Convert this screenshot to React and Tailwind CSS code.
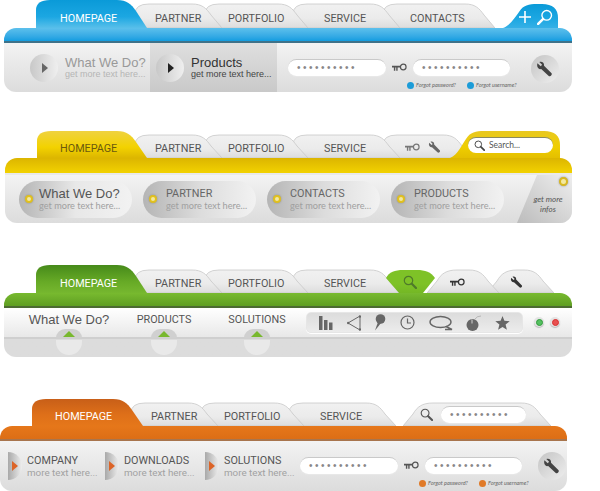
const themes = {
  blue: { stops: ["#0a9ad8", "#1ca7e2", "#58bfea"], bar: "from-[#5cc0ec] to-[#0e9de0] border-[#3f7289]" },
  yellow: { stops: ["#efd240", "#f3d200", "#dcb600"], bar: "from-[#dcb500] to-[#f2d200] border-[#e9e9e9]" },
  green: { stops: ["#468a1a", "#67aa26", "#76b72f"], bar: "from-[#78ba2f] to-[#5f9e22] border-[#4c6b32]" },
  orange: { stops: ["#c85f18", "#df7019", "#e5771a"], bar: "from-[#e6771a] to-[#dc6e16] border-[#a8754d]" },
};

const gray = ["#f1f1f1", "#ebebeb", "#dcdcdc"];

const tabPath = (w, h, t, kind) => {
  if (kind === "both")
    return `M0 ${h} L10 ${t + 11} C14 ${t + 4} 19 ${t} 30 ${t} H${w - 30} C${w - 20} ${t} ${w - 16} ${t + 4} ${w - 11} ${t + 11} L${w} ${h} Z`;
  if (kind === "left")
    return `M0 ${h} C8 ${h - 3} 12 ${t + 13} 16 ${t + 8} C20 ${t + 1} 26 ${t} 34 ${t} H${w - 16} Q${w} ${t} ${w} ${t + 14} V${h} Z`;
  if (kind === "invert")
    return `M14 ${h} L1 ${t + 8} C4 ${t + 2} 10 ${t} 18 ${t} H32 C40 ${t} 46 ${t + 2} ${w} ${t + 8} L${w - 12} ${h} Z`;
  return `M0 ${h} V${t + 10} Q0 ${t} 14 ${t} H${w - 30} C${w - 20} ${t} ${w - 16} ${t + 4} ${w - 11} ${t + 11} L${w} ${h} Z`;
};

const Tab = ({ id, w, h = 28, top = 4, kind = "right", stops = gray, className = "", inner = "pt-[10px]", children }) => (
  <div className={`relative flex shrink-0 items-center ${className}`}>
    <svg className="absolute inset-0" width={w} height={h} viewBox={`0 0 ${w} ${h}`}>
      <defs>
        <linearGradient id={id} x1="0" y1="0" x2="0" y2="1">
          <stop offset="0" stopColor={stops[0]} />
          <stop offset="0.6" stopColor={stops[1]} />
          <stop offset="1" stopColor={stops[2]} />
        </linearGradient>
      </defs>
      <path d={tabPath(w, h, top, kind)} fill={`url(#${id})`} stroke={stops === gray ? "#c8c8c8" : "none"} strokeWidth="0.8" />
    </svg>
    <div className={`relative flex items-center ${inner}`}>{children}</div>
  </div>
);

const Label = ({ children, className = "text-[#555]" }) => (
  <span className={`font-['Roboto',sans-serif] text-[10.800px] leading-none ${className}`}>{children}</span>
);

const Key = ({ color = "#555" }) => (
  <svg width="15" height="9" viewBox="0 0 16 9">
    <circle cx="12" cy="4" r="3" fill="none" stroke={color} strokeWidth="1.3" />
    <path d="M0 2.5h9v2H6V8H4.5V4.5h-1V8H2V4.5H0z" fill={color} />
  </svg>
);

const WrenchIcon = ({ size = 18, color = "#444" }) => (
  <svg width={size} height={size} viewBox="0 0 18 18">
    <path d="M1.5 2.5 L5 5.5 L6.5 4 L3.5 1 C6 0 9 1.500 8.500 5 L16.500 13 C17.500 14.500 15 17 13.500 16 L5.500 8.500 C2.500 9.500 0.500 6 1.500 2.500 Z" fill={color} />
  </svg>
);

const Lens = ({ size = 14, color = "#555" }) => (
  <svg width={size} height={size} viewBox="0 0 14 14">
    <circle cx="5.500" cy="5.500" r="4.200" fill="none" stroke={color} strokeWidth="1.200" />
    <path d="M8.800 8.800 L13 13" stroke={color} strokeWidth="2.200" strokeLinecap="round" />
  </svg>
);

const Dots = ({ className = "w-[98px]" }) => (
  <div className={`flex h-[17px] items-center rounded-full border-t border-[#c9c9c9] bg-white pl-[9px] shadow-[0_1px_1px_#e8e8e8] ${className}`}>
    <span className="font-['Liberation_Sans',sans-serif] text-[10px] leading-none tracking-[2.500px] text-[#888]">••••••••••</span>
  </div>
);

const LoginFields = ({ dot, className = "" }) => (
  <div className={`flex flex-col ${className}`}>
    <div className="flex items-center">
      <Dots />
      <div className="mx-[6px] flex items-center"><Key /></div>
      <Dots className="w-[97px]" />
    </div>
    <div className="mt-[6px] flex h-[7px] items-center pl-[119px]">
      <span className={`h-[7px] w-[7px] rounded-full ${dot}`} />
      <span className="ml-[2px] w-[51px] font-['Lato',sans-serif] text-[5.500px] italic leading-none text-[#666]">Forgot password?</span>
      <span className={`h-[7px] w-[7px] rounded-full ${dot}`} />
      <span className="ml-[2px] font-['Lato',sans-serif] text-[5.500px] italic leading-none text-[#666]">Forgot username?</span>
    </div>
  </div>
);

const WrenchButton = ({ className = "" }) => (
  <div className={`flex h-[28px] w-[28px] items-center justify-center rounded-full bg-linear-to-br from-[#c4c4c4] to-[#efefef] ${className}`}>
    <WrenchIcon size={17} />
  </div>
);

const Play = ({ dark }) => (
  <div className="flex h-[28px] w-[28px] shrink-0 items-center justify-center rounded-full bg-linear-to-r from-[#c8c8c8] to-[#efefef]">
    <span className={`ml-[1px] h-0 w-0 border-y-[5px] border-l-[6px] border-y-transparent ${dark ? "border-l-[#222]" : "border-l-[#666]"}`} />
  </div>
);

const Bar = ({ theme, className = "" }) => (
  <div className={`h-[15px] rounded-t-[12px] border-b-2 bg-linear-to-b ${themes[theme].bar} ${className}`} />
);

const Pill = ({ title, big, className = "" }) => (
  <div className={`flex h-[37px] w-[113px] shrink-0 items-center rounded-full bg-linear-to-r from-[#b5b5b5] via-[#dcdcdc] to-[#f2f2f2] pl-[6px] ${className}`}>
    <span className="h-[8px] w-[8px] rounded-full border-2 border-[#e0c020] bg-[#f3e9a0] shadow-[0_0_2px_#888]" />
    <div className={`flex flex-col ${big ? "ml-[6px]" : "ml-[9px]"}`}>
      {big ? (
        <span className="font-['Liberation_Sans',sans-serif] text-[13px] leading-[13px] text-[#555]">{title}</span>
      ) : (
        <span className="font-['Roboto',sans-serif] text-[10.800px] leading-[12px] text-[#666]">{title}</span>
      )}
      <span className="whitespace-nowrap font-['Lato',sans-serif] text-[9.200px] leading-[11px] text-[#a0a0a0]">get more text here...</span>
    </div>
  </div>
);

const Notch = ({ title, big, className = "" }) => (
  <div className={`flex w-[70px] flex-col items-center pt-[3px] ${className}`}>
    <span className={big ? "whitespace-nowrap font-['Liberation_Sans',sans-serif] text-[13px] leading-[17px] text-[#555]" : "whitespace-nowrap font-['Roboto',sans-serif] text-[10.800px] leading-[17px] text-[#555]"}>{title}</span>
    <div className="mt-[1px] flex h-[9px] w-[26px] items-start justify-center rounded-t-full bg-[#d0d0d0] pt-[2px]">
      <span className="h-0 w-0 border-x-[6px] border-b-[6px] border-x-transparent border-b-[#78b82e]" />
    </div>
    <div className="mt-[2px] h-[15px] w-[26px] rounded-b-full bg-[#e9e9e9]" />
  </div>
);

const ToolIcons = () => (
  <div className="ml-[14px] mt-[4px] flex h-[21px] w-[217px] items-center justify-between rounded-[5px] border border-[#e6e6e6] bg-linear-to-b from-[#dcdcdc] to-[#ececec] px-[12px] shadow-[0_1px_0_#fff]">
    <svg width="14" height="14" viewBox="0 0 14 14" fill="#666"><path d="M0 0h3.500v14H0zM5 4h3.500v10H5zM10 6.500h3.500V14H10z" /></svg>
    <svg width="14" height="16" viewBox="0 0 14 16" fill="#666"><path d="M13 1 L1 8 L13 15 Z" fill="none" stroke="#666" /><circle cx="13" cy="1.500" r="1.200" /><circle cx="13" cy="14.500" r="1.200" /><circle cx="1.200" cy="8" r="1.200" /></svg>
    <svg width="12" height="17" viewBox="0 0 12 17" fill="#666"><circle cx="6.500" cy="5" r="4.800" /><path d="M4 8 L1 16.500 L7 9 Z" /></svg>
    <svg width="15" height="15" viewBox="0 0 15 15" fill="none" stroke="#666" strokeWidth="1.200"><circle cx="7.500" cy="7.500" r="6.500" /><path d="M7.500 3.500V8H11" /></svg>
    <svg width="24" height="16" viewBox="0 0 24 16" fill="none" stroke="#666" strokeWidth="1.400"><ellipse cx="11.500" cy="7" rx="10.500" ry="5.500" /><path d="M17 11.500 L23 14.500 H16" /></svg>
    <svg width="15" height="16" viewBox="0 0 15 16" fill="#666"><ellipse cx="6.500" cy="10" rx="6" ry="6" /><path d="M9 4 Q11 1 15 1" fill="none" stroke="#aaa" strokeWidth="0.800" /><path d="M6 4.500v4" stroke="#eee" strokeWidth="0.800" /></svg>
    <svg width="15" height="14" viewBox="0 0 15 14" fill="#666"><path d="M7.500 0 L9.400 4.800 L14.700 5.200 L10.600 8.500 L11.900 13.700 L7.500 10.900 L3.100 13.700 L4.400 8.500 L0.300 5.200 L5.600 4.800 Z" /></svg>
  </div>
);

const Led = ({ color }) => (
  <span className="flex h-[10px] w-[10px] items-center justify-center rounded-full bg-[#e4e4e4] shadow-[0_1px_1px_#bbb]">
    <span className={`h-[7px] w-[7px] rounded-full border ${color}`} />
  </span>
);

const HalfItem = ({ title, className = "" }) => (
  <div className={`flex shrink-0 items-center ${className}`}>
    <div className="flex h-[28px] w-[14px] items-center rounded-r-full bg-linear-to-r from-[#a9a9a9] to-[#eeeeee] pl-[4px]">
      <span className="h-0 w-0 border-y-[5px] border-l-[6px] border-y-transparent border-l-[#dc6428]" />
    </div>
    <div className="ml-[5px] mt-[2px] flex flex-col font-['Roboto',sans-serif]">
      <span className="text-[10.800px] leading-[12px] text-[#555]">{title}</span>
      <span className="whitespace-nowrap text-[9.800px] leading-[12px] text-[#a2a2a2]">more text here...</span>
    </div>
  </div>
);

export default function App() {
  return (
    <div className="h-[491px] w-[600px] overflow-hidden bg-white">
      {/* blue */}
      <section className="ml-[4px] w-[568px]">
        <div className="flex h-[28px]">
          <Tab id="b0" w={111} top={0} stops={themes.blue.stops} className="z-50 ml-[32px] h-[28px] w-[111px] pl-[24px]"><Label className="text-white">HOMEPAGE</Label></Tab>
          <Tab id="b1" w={87} className="z-40 -ml-[12px] h-[28px] w-[87px] pl-[20px]"><Label>PARTNER</Label></Tab>
          <Tab id="b2" w={103} className="z-30 -ml-[17px] h-[28px] w-[103px] pl-[23px]"><Label>PORTFOLIO</Label></Tab>
          <Tab id="b3" w={107} className="z-20 -ml-[15px] h-[28px] w-[107px] pl-[31px]"><Label>SERVICE</Label></Tab>
          <Tab id="b4" w={112} className="z-10 -ml-[17px] h-[28px] w-[112px] pl-[27px]"><Label>CONTACTS</Label></Tab>
          <Tab id="b5" w={55} kind="left" inner="pt-[6px]" stops={["#0a9ad8", "#1ca7e2", "#35b0e6"]} className="ml-[8px] h-[28px] w-[55px] pl-[16px]">
            <svg width="12" height="12" viewBox="0 0 12 12"><path d="M6 0v12M0 6h12" stroke="#fff" strokeWidth="1.600" /></svg>
            <span className="ml-[6px] flex -scale-x-100"><Lens size={16} color="#fff" /></span>
          </Tab>
        </div>
        <Bar theme="blue" />
        <div className="flex h-[49px] rounded-b-[12px] bg-linear-to-b from-[#f3f3f3] to-[#dcdcdc]">
          <div className="flex w-[146px] items-center pl-[26px]">
            <Play />
            <div className="ml-[7px] flex flex-col font-['Liberation_Sans',sans-serif]">
              <span className="whitespace-nowrap text-[13px] leading-[13px] text-[#999]">What We Do?</span>
              <span className="whitespace-nowrap text-[9px] leading-[10px] text-[#b5b5b5]">get more text here...</span>
            </div>
          </div>
          <div className="flex w-[127px] items-center bg-linear-to-b from-[#dfdfdf] to-[#c9c9c9] pl-[6px]">
            <Play dark />
            <div className="ml-[7px] flex flex-col font-['Liberation_Sans',sans-serif]">
              <span className="text-[13px] leading-[13px] text-[#333]">Products</span>
              <span className="whitespace-nowrap text-[9px] leading-[10px] text-[#444]">get more text here...</span>
            </div>
          </div>
          <LoginFields dot="bg-[#1c9cd8]" className="ml-[11px] pt-[16px]" />
          <WrenchButton className="ml-[14px] mt-[12px]" />
        </div>
      </section>

      {/* yellow */}
      <section className="ml-[5px] mt-[39px] w-[567px]">
        <div className="flex h-[27px]">
          <Tab id="y0" w={110} h={27} top={0} stops={themes.yellow.stops} className="z-50 ml-[32px] h-[27px] w-[110px] pl-[23px]"><Label className="text-[#6b5a10]">HOMEPAGE</Label></Tab>
          <Tab id="y1" w={87} h={27} className="z-40 -ml-[12px] h-[27px] w-[87px] pl-[20px]"><Label>PARTNER</Label></Tab>
          <Tab id="y2" w={103} h={27} className="z-30 -ml-[17px] h-[27px] w-[103px] pl-[23px]"><Label>PORTFOLIO</Label></Tab>
          <Tab id="y3" w={107} h={27} className="z-20 -ml-[15px] h-[27px] w-[107px] pl-[31px]"><Label>SERVICE</Label></Tab>
          <Tab id="y4" w={90} h={27} inner="pt-[6px]" className="z-10 -ml-[17px] h-[27px] w-[90px] pl-[22px]">
            <Key color="#777" />
            <span className="ml-[8px] flex"><WrenchIcon size={13} color="#666" /></span>
          </Tab>
          <Tab id="y5" w={110} h={27} top={0} kind="left" inner="" stops={["#e8c820", "#efce00", "#e4bf00"]} className="z-20 -ml-[23px] h-[27px] w-[110px] pl-[18px]">
            <div className="flex h-[16px] w-[85px] items-center rounded-full border-t border-[#8a8a60] bg-white pl-[6px]">
              <Lens size={11} color="#444" />
              <span className="ml-[4px] font-['Lato',sans-serif] text-[8.500px] leading-none text-[#555]">Search...</span>
            </div>
          </Tab>
        </div>
        <Bar theme="yellow" className="h-[17px]" />
        <div className="flex h-[48px] items-center rounded-b-[12px] bg-linear-to-b from-[#f3f3f3] to-[#dcdcdc] pl-[14px]">
          <Pill title="What We Do?" big className="bg-linear-to-r from-[#b5b5b5] via-[#e8e8e8] to-[#f2f2f2]" />
          <Pill title="PARTNER" className="ml-[11px]" />
          <Pill title="CONTACTS" className="ml-[11px]" />
          <Pill title="PRODUCTS" className="ml-[11px]" />
          <div className="relative ml-[13px] flex h-full flex-1 items-center justify-end overflow-hidden rounded-br-[12px] bg-linear-to-tr from-[#bcbcbc] to-[#eeeeee] pr-[6px] pt-[10px] [clip-path:polygon(20px_0,100%_0,100%_100%,0_100%)]">
            <span className="w-[36px] text-center font-['Lato',sans-serif] text-[8px] italic leading-[10px] text-[#555]">get more infos</span>
            <span className="absolute right-[4px] top-[2px] h-[9px] w-[9px] rounded-full border-2 border-[#d8b820] bg-[#f3e9a0] shadow-[0_0_2px_#888]" />
          </div>
        </div>
      </section>

      {/* green */}
      <section className="ml-[4px] mt-[42px] w-[568px]">
        <div className="flex h-[28px]">
          <Tab id="g0" w={111} top={0} stops={themes.green.stops} className="z-50 ml-[32px] h-[28px] w-[111px] pl-[24px]"><Label className="text-white">HOMEPAGE</Label></Tab>
          <Tab id="g1" w={87} top={5} className="z-40 -ml-[12px] h-[28px] w-[87px] pl-[20px]"><Label>PARTNER</Label></Tab>
          <Tab id="g2" w={103} top={5} className="z-30 -ml-[17px] h-[28px] w-[103px] pl-[23px]"><Label>PORTFOLIO</Label></Tab>
          <Tab id="g3" w={107} top={5} className="z-20 -ml-[15px] h-[28px] w-[107px] pl-[31px]"><Label>SERVICE</Label></Tab>
          <Tab id="g4" w={50} top={5} kind="invert" inner="pt-[6px]" stops={["#7ec227", "#7ec227", "#74b725"]} className="z-30 -ml-[15px] h-[28px] w-[50px] pl-[18px]"><Lens size={14} color="#4f7a2a" /></Tab>
          <Tab id="g5" w={72} top={5} kind="both" inner="pt-[6px]" className="z-20 -ml-[8px] h-[28px] w-[72px] pl-[23px]"><Key color="#333" /></Tab>
          <Tab id="g6" w={67} top={5} kind="both" inner="pt-[6px]" className="z-10 -ml-[12px] h-[28px] w-[67px] pl-[23px]"><WrenchIcon size={13} color="#333" /></Tab>
        </div>
        <Bar theme="green" />
        <div className="relative h-[49px] overflow-hidden rounded-b-[12px] bg-linear-to-b from-[#f3f3f3] from-60% to-[#dcdcdc] to-60%">
          <div className="absolute inset-x-0 top-0 h-[31px] border-b-2 border-[#cfcfcf] bg-linear-to-b from-white to-[#e8e8e8]" />
          <div className="relative flex">
            <Notch title="What We Do?" big className="ml-[30px]" />
            <Notch title="PRODUCTS" className="ml-[25px]" />
            <Notch title="SOLUTIONS" className="ml-[23px]" />
            <ToolIcons />
            <div className="ml-[11px] mt-[9px] flex h-[10px] gap-[6px]">
              <Led color="border-[#2f9a3a] bg-[#55c060]" />
              <Led color="border-[#d83030] bg-[#e85050]" />
            </div>
          </div>
        </div>
      </section>

      {/* orange */}
      <section className="mt-[42px] w-[567px]">
        <div className="flex h-[27px]">
          <Tab id="o0" w={111} h={27} top={0} stops={themes.orange.stops} className="z-50 ml-[32px] h-[27px] w-[111px] pl-[23px]"><Label className="text-white">HOMEPAGE</Label></Tab>
          <Tab id="o1" w={87} h={27} className="z-40 -ml-[12px] h-[27px] w-[87px] pl-[20px]"><Label>PARTNER</Label></Tab>
          <Tab id="o2" w={103} h={27} className="z-30 -ml-[17px] h-[27px] w-[103px] pl-[23px]"><Label>PORTFOLIO</Label></Tab>
          <Tab id="o3" w={107} h={27} className="z-20 -ml-[15px] h-[27px] w-[107px] pl-[31px]"><Label>SERVICE</Label></Tab>
          <Tab id="o4" w={148} h={27} kind="both" inner="pt-[3px]" className="z-10 ml-[7px] h-[27px] w-[148px] pl-[17px]">
            <Lens size={13} color="#555" />
            <div className="ml-[8px]"><Dots className="w-[85px]" /></div>
          </Tab>
        </div>
        <Bar theme="orange" />
        <div className="flex h-[50px] rounded-b-[12px] bg-linear-to-b from-[#f3f3f3] to-[#dcdcdc]">
          <HalfItem title="COMPANY" className="w-[105px] pl-[8px]" />
          <HalfItem title="DOWNLOADS" className="w-[100px]" />
          <HalfItem title="SOLUTIONS" className="w-[95px]" />
          <LoginFields dot="bg-[#e07a28]" className="pt-[16px]" />
          <WrenchButton className="ml-[9px] mt-[11px]" />
        </div>
      </section>
    </div>
  );
}
